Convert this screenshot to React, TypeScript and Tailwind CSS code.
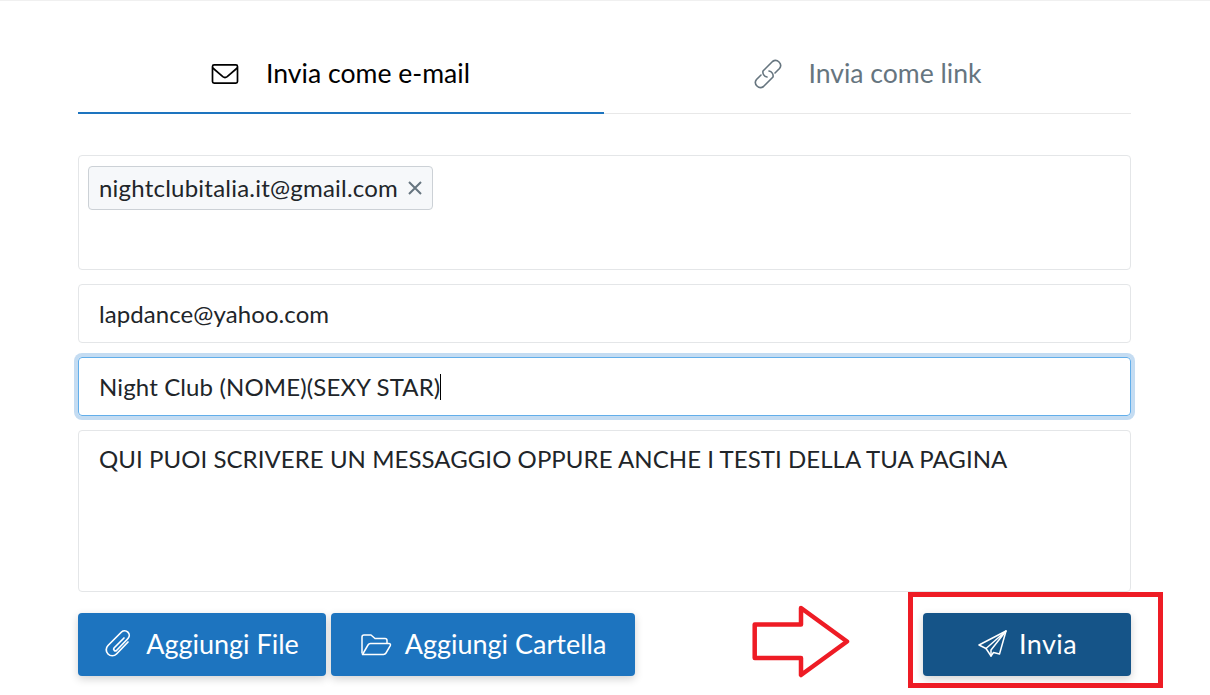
import React from "react";

const font = { fontFamily: '"Lato", sans-serif' };

function Envelope() {
  return (
    <svg width="28" height="22" viewBox="6 9 28 22" fill="none" stroke="currentColor" strokeWidth="1.7" strokeLinejoin="round" strokeLinecap="round">
      <rect x="7.5" y="10.8" width="25" height="18.4" rx="1.6" />
      <path d="M7.8 14 L17.8 22.6 Q20 24.4 22.2 22.6 L32.2 14" />
    </svg>
  );
}
function LinkIcon() {
  return (
    <svg width="31" height="31" viewBox="5 4 31 31" fill="none" stroke="currentColor" strokeWidth="1.6" strokeLinecap="round" strokeLinejoin="round">
      <path d="M27 19 L31.5 14.5 A5 5 0 0 0 24.5 7.5 L15 17 A5 5 0 0 0 19 23" />
      <path d="M13 21 L8.5 25.5 A5 5 0 0 0 15.5 32.5 L25 23 A5 5 0 0 0 21 17" />
    </svg>
  );
}
function Clip() {
  return (
    <svg className="mb-[3px]" width="27" height="28" viewBox="5 4 27 28" fill="none" stroke="currentColor" strokeWidth="1.7" strokeLinecap="round" strokeLinejoin="round">
      <path d="M28 17 L16.5 29 A6 6 0 0 1 8 20.5 L21.5 7 A4.6 4.6 0 0 1 28 13.5 L16.5 25.5 A1.8 1.8 0 0 1 14 23 L24 13" />
    </svg>
  );
}
function Folder() {
  return (
    <svg width="32" height="23" viewBox="4 8 32 23" fill="none" stroke="currentColor" strokeWidth="1.5" strokeLinecap="round" strokeLinejoin="round">
      <path d="M6 28 V12 A2 2 0 0 1 8 10 H15 L19 13.5 H29 A2 2 0 0 1 31 15.5 V18" />
      <path d="M6.5 29.5 L12 20 A3 3 0 0 1 14.5 18.5 H33 A1.5 1.5 0 0 1 34.3 20.7 L30 28 A3 3 0 0 1 27.5 29.5 H7.5 A1.2 1.2 0 0 1 6.5 29.5 Z" />
    </svg>
  );
}
function Plane() {
  return (
    <svg className="mb-[2px]" width="31" height="27" viewBox="6 5 31 27" fill="none" stroke="currentColor" strokeWidth="1.5" strokeLinecap="round" strokeLinejoin="round">
      <path d="M35 6 L8 20 L15 23.5 L20 31 L22.5 27.5 L28.5 29 Z" />
      <path d="M15 23.5 L35 6 L20 25 L20 31" />
    </svg>
  );
}
function Btn({ icon, label, bg, w, gap, track }: { icon: React.ReactNode; label: string; bg: string; w: string; gap: string; track?: string }) {
  return (
    <button className={`flex h-[63px] items-center justify-center rounded-[4px] text-[27px] text-white shadow-[0_3px_8px_rgba(0,0,0,0.18)] ${bg} ${w} ${gap}`}>
      {icon}
      <span className={track}>{label}</span>
    </button>
  );
}

export default function App() {
  return (
    <div style={font} className="relative h-[695px] w-[1210px] overflow-hidden border-t border-[#f0f0f0] bg-white pl-[78px] pr-[79px]">
      <div className="grid h-[113px] grid-cols-[526px_1fr] border-b border-[#e8e8e8] text-[26.6px]">
        <div className="flex h-[113px] items-center justify-center gap-[27px] border-b-2 border-[#1d74bf] pr-[1px] pt-[34px] text-black">
          <Envelope />
          <span>Invia come e-mail</span>
        </div>
        <div className="flex h-[112px] items-center justify-center gap-[24px] pt-[33px] text-[#66757f]">
          <LinkIcon />
          <span>Invia come link</span>
        </div>
      </div>

      <div className="mt-[41px] flex flex-col text-[24px] text-[#212529]">
        <div className="h-[115px] rounded-[4px] border border-[#e4e6e8] px-[9px] pt-[10px]">
          <div className="inline-flex h-[44px] items-center gap-[9px] rounded-[4px] border border-[#ccd1d6] bg-[#f6f8fa] pl-[10px] pr-[9px]">
            <span className="tracking-[0.22px]">nightclubitalia.it@gmail.com</span>
            <svg width="16" height="16" viewBox="0 0 16 16" fill="none" stroke="#66757f" strokeWidth="2">
              <path d="M2 2 L14 14 M14 2 L2 14" />
            </svg>
          </div>
        </div>
        <div className="mt-[14px] flex h-[59px] items-center rounded-[4px] border border-[#e4e6e8] px-[20px] tracking-[0.08px]">lapdance@yahoo.com</div>
        <div className="mt-[14px] flex h-[59px] items-center rounded-[4px] border border-[#62aeea] px-[20px] tracking-[0.13px] shadow-[0_0_0_4px_#c4dcf2]">
          <span>Night Club (NOME)(SEXY STAR)</span>
          <span className="h-[26px] w-px bg-black" />
        </div>
        <div className="mt-[14px] h-[162px] rounded-[4px] border border-[#e4e6e8] px-[20px] pt-[10px] tracking-[0.06px]">QUI PUOI SCRIVERE UN MESSAGGIO OPPURE ANCHE I TESTI DELLA TUA PAGINA</div>

        <div className="mt-[21px] flex items-center">
          <Btn icon={<Clip />} label="Aggiungi File" bg="bg-[#1d74bf]" w="w-[248px]" gap="gap-[14px]" />
          <div className="ml-[5px]">
            <Btn icon={<Folder />} label="Aggiungi Cartella" bg="bg-[#1d74bf]" w="w-[304px]" gap="gap-[13px]" />
          </div>
          <div className="ml-auto">
            <Btn icon={<Plane />} label="Invia" bg="bg-[#155488]" w="w-[208px]" gap="gap-[11px]" track="tracking-[0.4px]" />
          </div>
        </div>
      </div>

      <svg className="absolute left-[750px] top-[603px]" width="102" height="76" viewBox="0 0 102 76" fill="none" stroke="#ee1c25" strokeWidth="4.5" strokeLinejoin="round">
        <path d="M4.7 20.5 H51 V4 L97 37.5 L51 71 V54 H4.7 Z" />
      </svg>
      <div className="pointer-events-none absolute left-[908px] top-[591px] h-[96px] w-[255px] border-[5px] border-[#ee1c25]" />
    </div>
  );
}
